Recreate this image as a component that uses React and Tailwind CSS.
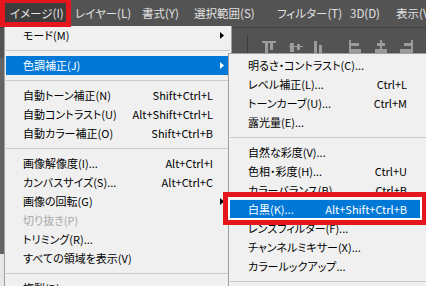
import React from 'react';

const menuBar = [
  { name: 'イメージ(I)', w: 'w-[65px]', active: true },
  { name: 'レイヤー(L)', w: 'w-[67px]' },
  { name: '書式(Y)', w: 'w-[52px]' },
  { name: '選択範囲(S)', w: 'w-[83px]' },
  { name: 'フィルター(T)', w: 'w-[73px]' },
  { name: '3D(D)', w: 'w-[46px]' },
  { name: '表示(V)', w: 'w-[60px]' },
];

const imageMenu = [
  { label: 'モード(M)', arrow: true },
  'sep',
  { label: '色調補正(J)', arrow: true, active: true },
  'sep',
  { label: '自動トーン補正(N)', key: 'Shift+Ctrl+L' },
  { label: '自動コントラスト(U)', key: 'Alt+Shift+Ctrl+L' },
  { label: '自動カラー補正(O)', key: 'Shift+Ctrl+B' },
  'sep',
  { label: '画像解像度(I)...', key: 'Alt+Ctrl+I' },
  { label: 'カンバスサイズ(S)...', key: 'Alt+Ctrl+C' },
  { label: '画像の回転(G)', arrow: true },
  { label: '切り抜き(P)', disabled: true },
  { label: 'トリミング(R)...' },
  { label: 'すべての領域を表示(V)' },
  'sep',
  { label: '複製(D)...' },
];

const adjustMenu = [
  { label: '明るさ・コントラスト(C)...' },
  { label: 'レベル補正(L)...', key: 'Ctrl+L' },
  { label: 'トーンカーブ(U)...', key: 'Ctrl+M' },
  { label: '露光量(E)...' },
  'sep',
  { label: '自然な彩度(V)...' },
  { label: '色相・彩度(H)...', key: 'Ctrl+U' },
  { label: 'カラーバランス(B)...', key: 'Ctrl+B' },
  { label: '白黒(K)...', key: 'Alt+Shift+Ctrl+B', active: true },
  { label: 'レンズフィルター(F)...' },
  { label: 'チャンネルミキサー(X)...' },
  { label: 'カラールックアップ...' },
  'sep',
  { label: '反転(I)', key: 'Ctrl+I' },
];

const Arrow = ({ white }) => (
  <svg width="4" height="7" viewBox="0 0 4 7">
    <path d="M0 0L4 3.5L0 7Z" fill={white ? '#fff' : '#000'} />
  </svg>
);

const MenuList = ({ items, pad }) =>
  items.map((it, i) =>
    it === 'sep' ? (
      <div key={i} className="h-[11px] flex items-center px-[1px]">
        <div className="h-px w-full bg-[#cacaca]" />
      </div>
    ) : (
      <div
        key={i}
        className={`relative flex items-center h-[19px] mx-[1px] whitespace-nowrap ${pad} ${
          it.active ? 'bg-[#0078d7] text-white' : it.disabled ? 'text-[#a8a8a8]' : 'text-black'
        }`}
      >
        <span>{it.label}</span>
        {it.key && <span className="ml-auto">{it.key}</span>}
        {it.arrow && (
          <span className="absolute right-[6px] top-[6px] flex">
            <Arrow white={it.active} />
          </span>
        )}
      </div>
    )
  );

const AlignIcons = () => (
  <div className="flex items-start pt-[12px]">
    <div className="ml-[247px] mt-[-4px] w-px h-[20px] bg-[#3c3c3c]" />
    <svg className="ml-[14px]" width="14" height="14" viewBox="0 0 14 14" fill="#9b9b9b">
      <rect x="0" y="1" width="14" height="2" />
      <rect x="3" y="3" width="3" height="11" />
      <rect x="8" y="3" width="3" height="7" />
    </svg>
    <svg className="ml-[13px]" width="14" height="14" viewBox="0 0 14 14" fill="#9b9b9b">
      <rect x="0" y="6" width="14" height="1" />
      <rect x="1" y="3" width="4" height="9" />
      <rect x="8" y="4" width="3" height="6" />
    </svg>
    <svg className="ml-[10px]" width="10" height="14" viewBox="0 0 10 14" fill="#9b9b9b">
      <rect x="1" y="1" width="3" height="13" />
      <rect x="6" y="5" width="3" height="9" />
    </svg>
    <svg className="ml-[26px]" width="12" height="14" viewBox="0 0 12 14" fill="#9b9b9b">
      <rect x="0" y="0" width="2" height="14" />
      <rect x="2" y="3" width="8" height="3" />
      <rect x="2" y="9" width="10" height="4" />
    </svg>
    <svg className="ml-[14px]" width="12" height="14" viewBox="0 0 12 14" fill="#9b9b9b">
      <rect x="5" y="0" width="2" height="14" />
      <rect x="2" y="3" width="8" height="3" />
      <rect x="0" y="9" width="12" height="4" />
    </svg>
    <svg className="ml-[13px]" width="13" height="14" viewBox="0 0 13 14" fill="#9b9b9b">
      <rect x="11" y="0" width="2" height="14" />
      <rect x="4" y="3" width="7" height="3" />
      <rect x="0" y="9" width="11" height="4" />
    </svg>
  </div>
);

export default function App() {
  return (
    <div className="relative w-[426px] h-[286px] overflow-hidden bg-[#535353] font-['Noto_Sans_CJK_JP',sans-serif] [font-feature-settings:'palt'] text-[11px] leading-none">
      <div className="flex h-[27px] pl-[3px] text-[11.5px] text-[#e2e2e2]">
        {menuBar.map((m) => (
          <div
            key={m.name}
            className={`flex items-center shrink-0 pl-[7px] whitespace-nowrap ${m.w} ${m.active ? 'bg-[#3d3d3d]' : ''}`}
          >
            {m.name}
          </div>
        ))}
      </div>
      <div className="h-px bg-[#404040]" />
      <div className="h-[30px]">
        <AlignIcons />
      </div>
      <div className="w-[4px] h-[196px] bg-[#646464]" />
      <div className="w-[4px] h-[40px] bg-[#e6e6e6]" />

      <div className="absolute left-[4px] top-[26px] w-[228px] h-[280px] bg-[#f0f0f0] border-x border-[#a0a0a0]">
        <MenuList items={imageMenu} pad="pl-[17px] pr-[17px]" />
      </div>

      <div className="absolute left-[228px] top-[53px] w-[204px] bg-[#f0f0f0] border border-[#a0a0a0] pt-[2px] shadow-[2px_2px_3px_rgba(0,0,0,0.25)]">
        <MenuList items={adjustMenu} pad="pl-[18px] pr-[23px]" />
      </div>

      <div className="absolute left-0 top-0 w-[71px] h-[27px] border-[5px] border-t-[3px] border-[#e5161e]" />
      <div className="absolute left-[223px] top-[192px] w-[203px] h-[33px] border-[5px] border-r-[4px] border-[#e5161e] shadow-[inset_0_0_0_2px_#ffffff]" />
    </div>
  );
}
